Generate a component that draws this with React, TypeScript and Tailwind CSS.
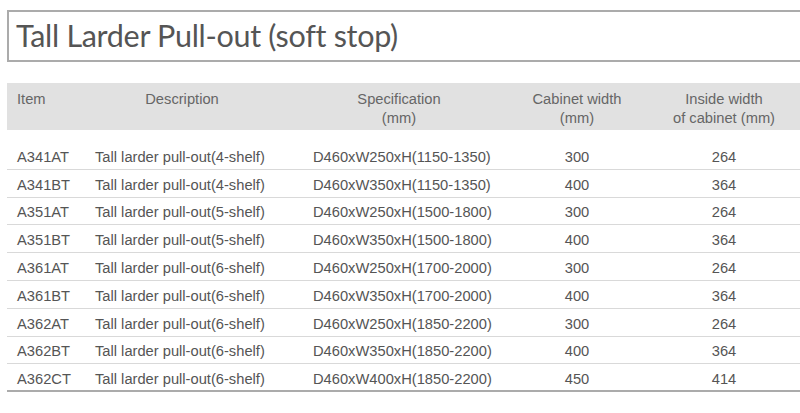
const rows = [
  ['A341AT', 'Tall larder pull-out(4-shelf)', 'D460xW250xH(1150-1350)', '300', '264'],
  ['A341BT', 'Tall larder pull-out(4-shelf)', 'D460xW350xH(1150-1350)', '400', '364'],
  ['A351AT', 'Tall larder pull-out(5-shelf)', 'D460xW250xH(1500-1800)', '300', '264'],
  ['A351BT', 'Tall larder pull-out(5-shelf)', 'D460xW350xH(1500-1800)', '400', '364'],
  ['A361AT', 'Tall larder pull-out(6-shelf)', 'D460xW250xH(1700-2000)', '300', '264'],
  ['A361BT', 'Tall larder pull-out(6-shelf)', 'D460xW350xH(1700-2000)', '400', '364'],
  ['A362AT', 'Tall larder pull-out(6-shelf)', 'D460xW250xH(1850-2200)', '300', '264'],
  ['A362BT', 'Tall larder pull-out(6-shelf)', 'D460xW350xH(1850-2200)', '400', '364'],
  ['A362CT', 'Tall larder pull-out(6-shelf)', 'D460xW400xH(1850-2200)', '450', '414'],
];

const cols = 'grid grid-cols-[81px_188px_246px_110px_1fr]';

export default function App() {
  return (
    <div className="w-[800px] h-[413px] overflow-hidden bg-white pl-[7px] pt-[10px] text-[#555] font-['Liberation_Sans',Arial,sans-serif]">
      {/* Title */}
      <div className="h-[52px] border-y-2 border-l-2 border-[#ababab] flex items-center pl-[7px]">
        <h1 className="text-[30.5px] leading-none text-[#555] font-['Lato','Liberation_Sans',sans-serif] tracking-[-0.3px] pb-[2px]">
          Tall Larder Pull-out (soft stop)
        </h1>
      </div>

      {/* Table */}
      <div className="mt-[21px] text-[14.7px]">
        <div className={`${cols} h-[47px] bg-[#e1e1e1] text-[#666] leading-[19px] pt-[7px]`}>
          <div className="pl-[10px]">Item</div>
          <div className="text-center">Description</div>
          <div className="text-center">
            Specification
            <br />
            (mm)
          </div>
          <div className="text-center">
            Cabinet width
            <br />
            (mm)
          </div>
          <div className="text-center pl-[16px]">
            Inside width
            <br />
            of cabinet (mm)
          </div>
        </div>

        <div className="pt-[12px]">
          {rows.map((r, i) => (
            <div
              key={r[0]}
              className={`${cols} h-[27.8px] items-center pt-[3px] ${
                i === rows.length - 1 ? 'border-b-2 border-[#ababab]' : 'border-b border-[#d9d9d9]'
              }`}
            >
              <div className="pl-[10px]">{r[0]}</div>
              <div className="pl-[7px] whitespace-nowrap">{r[1]}</div>
              <div className="pl-[37px] whitespace-nowrap">{r[2]}</div>
              <div className="text-center">{r[3]}</div>
              <div className="text-center pl-[16px]">{r[4]}</div>
            </div>
          ))}
        </div>
      </div>
    </div>
  );
}
